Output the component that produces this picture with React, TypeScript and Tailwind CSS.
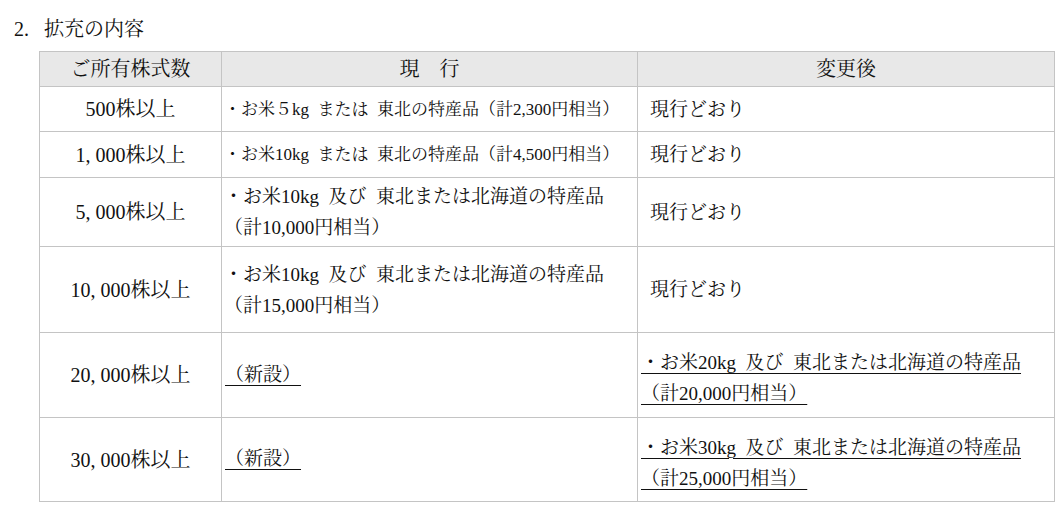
import React from 'react';

const FONT = { fontFamily: '"Liberation Serif", "Noto Serif CJK JP", "Noto Sans CJK JP", serif' };

type Row = {
  shares: string;
  current: string[];
  currentNew?: boolean;
  small?: boolean;
  after: string[];
  afterNew?: boolean;
  h: string;
};

// \u2002 = en space, close to the wide gaps of the original document
const ROWS: Row[] = [
  { shares: '500株以上', current: ['・お米５kg\u2002または\u2002東北の特産品（計2,300円相当）'], small: true, after: ['現行どおり'], h: 'h-[45px]' },
  { shares: '1,000株以上', current: ['・お米10kg\u2002または\u2002東北の特産品（計4,500円相当）'], small: true, after: ['現行どおり'], h: 'h-[46px]' },
  { shares: '5,000株以上', current: ['・お米10kg\u2002及び\u2002東北または北海道の特産品', '（計10,000円相当）'], after: ['現行どおり'], h: 'h-[69px]' },
  { shares: '10,000株以上', current: ['・お米10kg\u2002及び\u2002東北または北海道の特産品', '（計15,000円相当）'], after: ['現行どおり'], h: 'h-[86px]' },
  { shares: '20,000株以上', current: ['（新設）'], currentNew: true, after: ['・お米20kg\u2002及び\u2002東北または北海道の特産品', '（計20,000円相当）'], afterNew: true, h: 'h-[85px]' },
  { shares: '30,000株以上', current: ['（新設）'], currentNew: true, after: ['・お米30kg\u2002及び\u2002東北または北海道の特産品', '（計25,000円相当）'], afterNew: true, h: 'h-[84px]' },
];

function Lines({ lines, underline }: { lines: string[]; underline?: boolean }) {
  return (
    <div className="flex flex-col leading-[31px] whitespace-nowrap">
      {lines.map((l, i) => (
        <span key={i} className={underline ? 'underline decoration-1 underline-offset-[4px] self-start' : ''}>
          {l}
        </span>
      ))}
    </div>
  );
}

// the document's comma is set wide ("10, 000")
function Shares({ text }: { text: string }) {
  const parts = text.split(',');
  return (
    <>
      {parts.map((p, i) => (
        <React.Fragment key={i}>
          {i > 0 && <span className="mr-[5px]">,</span>}
          {p}
        </React.Fragment>
      ))}
    </>
  );
}

export default function App() {
  return (
    <div className="w-[1063px] h-[512px] bg-white text-[#111] overflow-hidden" style={FONT}>
      <div className="flex items-center h-[51px] pt-[6px] pl-[14px] text-[20px]">
        <span className="w-[30px]">2.</span>
        <span>拡充の内容</span>
      </div>

      <table className="ml-[39px] w-[1015px] border-collapse table-fixed text-[19px]">
        <colgroup>
          <col className="w-[182px]" />
          <col className="w-[416px]" />
          <col className="w-[417px]" />
        </colgroup>
        <thead>
          <tr className="h-[35px] bg-[#e8e8e8] text-[20px]">
            <th className="border border-[#c4c4c4] font-normal text-center">ご所有株式数</th>
            <th className="border border-[#c4c4c4] font-normal text-center">現　行</th>
            <th className="border border-[#c4c4c4] font-normal text-center">変更後</th>
          </tr>
        </thead>
        <tbody>
          {ROWS.map((r) => (
            <tr key={r.shares} className={r.h}>
              <td className="border border-[#c4c4c4] text-center align-middle whitespace-nowrap text-[20px]">
                <Shares text={r.shares} />
              </td>
              <td className={`border border-[#c4c4c4] align-middle pl-[2px] pr-0 py-0 ${r.small ? 'text-[17px]' : ''}`}>
                {r.currentNew ? (
                  <span className="underline decoration-1 underline-offset-[4px] pl-[1px]">{r.current[0]}</span>
                ) : (
                  <Lines lines={r.current} />
                )}
              </td>
              <td className={`border border-[#c4c4c4] align-middle ${r.afterNew ? 'pl-[3px] pt-[6px] pb-0' : 'pl-[12px] py-0'}`}>
                <Lines lines={r.after} underline={r.afterNew} />
              </td>
            </tr>
          ))}
        </tbody>
      </table>
    </div>
  );
}
